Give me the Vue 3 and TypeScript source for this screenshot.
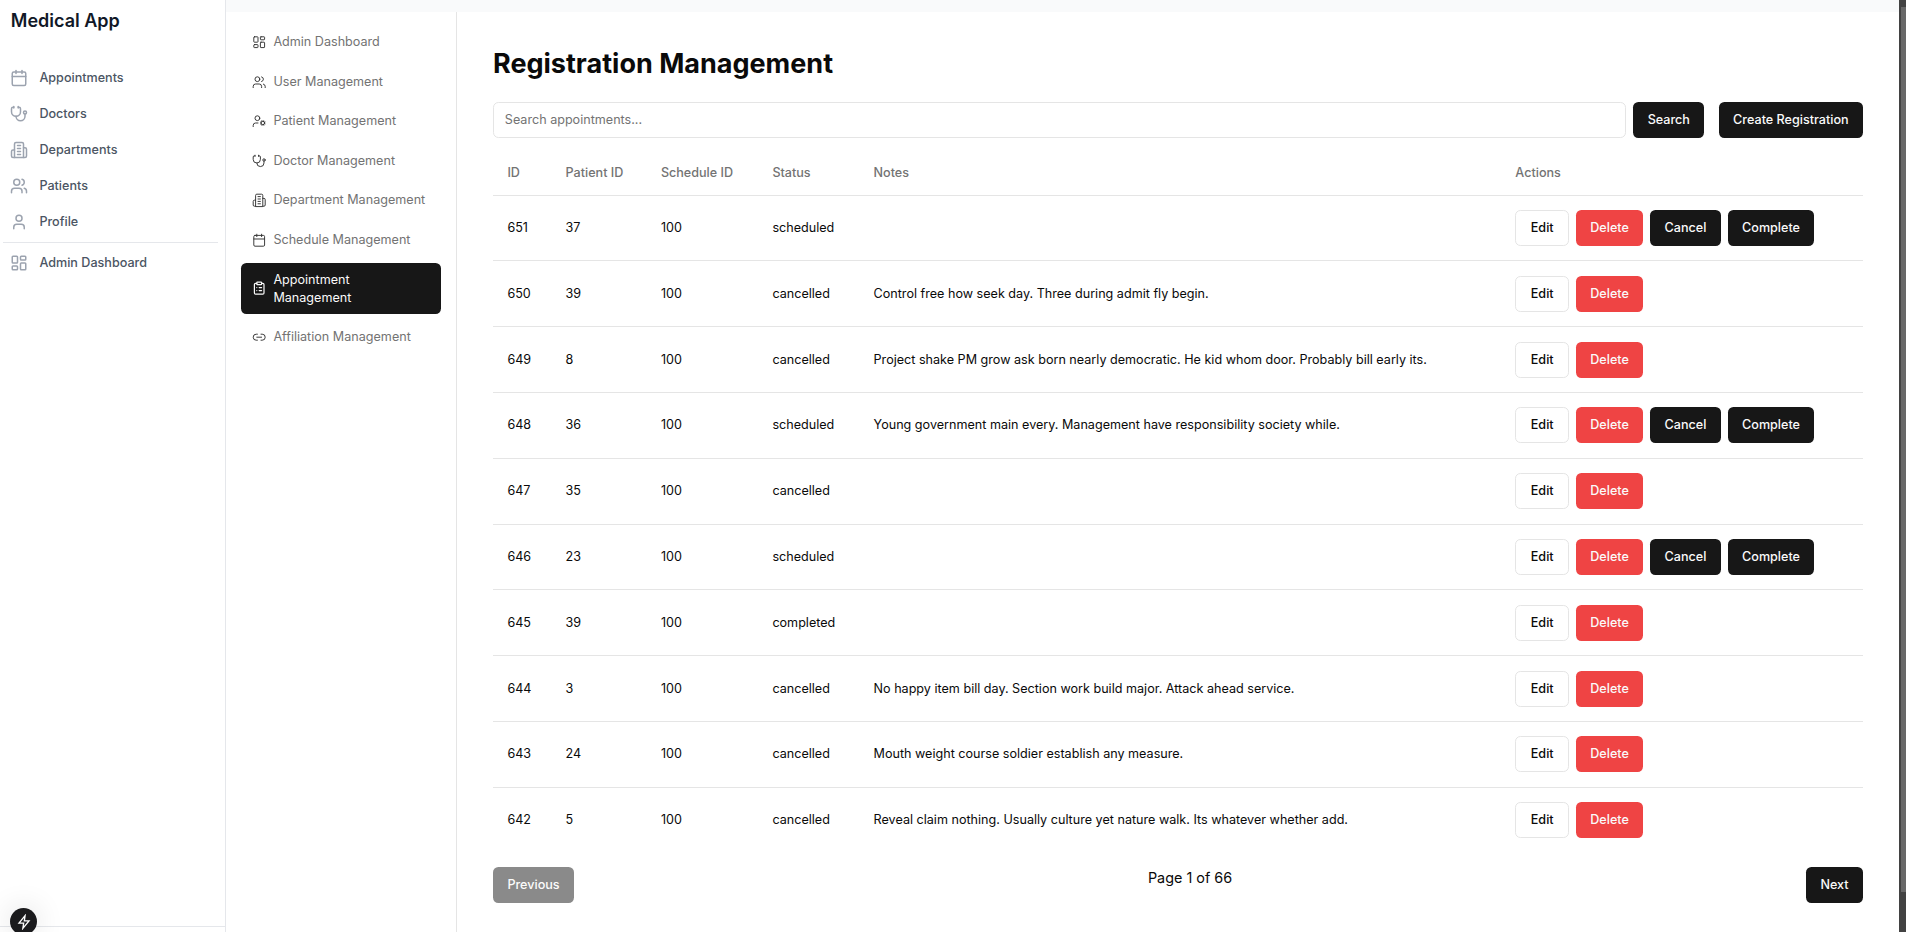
<script setup lang="ts">
type NavItem = { label: string; icon: string; active?: boolean }

const icons: Record<string, string> = {
  calendar:
    '<path d="M8 2v4"/><path d="M16 2v4"/><rect width="18" height="18" x="3" y="4" rx="2"/><path d="M3 10h18"/>',
  stethoscope:
    '<path d="M11 2v2"/><path d="M5 2v2"/><path d="M5 3H4a2 2 0 0 0-2 2v4a6 6 0 0 0 12 0V5a2 2 0 0 0-2-2h-1"/><path d="M8 15a6 6 0 0 0 12 0v-3"/><circle cx="20" cy="10" r="2"/>',
  building:
    '<path d="M6 22V4a2 2 0 0 1 2-2h8a2 2 0 0 1 2 2v18Z"/><path d="M6 12H4a2 2 0 0 0-2 2v6a2 2 0 0 0 2 2h2"/><path d="M18 9h2a2 2 0 0 1 2 2v9a2 2 0 0 1-2 2h-2"/><path d="M10 6h4"/><path d="M10 10h4"/><path d="M10 14h4"/><path d="M10 18h4"/>',
  users:
    '<path d="M16 21v-2a4 4 0 0 0-4-4H6a4 4 0 0 0-4 4v2"/><circle cx="9" cy="7" r="4"/><path d="M22 21v-2a4 4 0 0 0-3-3.87"/><path d="M16 3.13a4 4 0 0 1 0 7.75"/>',
  user: '<path d="M19 21v-2a4 4 0 0 0-4-4H9a4 4 0 0 0-4 4v2"/><circle cx="12" cy="7" r="4"/>',
  dashboard:
    '<rect width="7" height="9" x="3" y="3" rx="1"/><rect width="7" height="5" x="14" y="3" rx="1"/><rect width="7" height="9" x="14" y="12" rx="1"/><rect width="7" height="5" x="3" y="16" rx="1"/>',
  userCog:
    '<circle cx="18" cy="15" r="3"/><circle cx="9" cy="7" r="4"/><path d="M10 15H6a4 4 0 0 0-4 4v2"/><path d="m21.7 16.4-.9-.3"/><path d="m15.2 13.9-.9-.3"/><path d="m16.6 18.7.3-.9"/><path d="m19.1 12.2.3-.9"/><path d="m19.6 18.7-.4-1"/><path d="m16.8 12.3-.4-1"/><path d="m14.3 16.6 1-.4"/><path d="m20.7 13.8 1-.4"/>',
  clipboard:
    '<rect width="8" height="4" x="8" y="2" rx="1"/><path d="M16 4h2a2 2 0 0 1 2 2v14a2 2 0 0 1-2 2H6a2 2 0 0 1-2-2V6a2 2 0 0 1 2-2h2"/><path d="M12 11h4"/><path d="M12 16h4"/><path d="M8 11h.01"/><path d="M8 16h.01"/>',
  link: '<path d="M9 17H7A5 5 0 0 1 7 7h2"/><path d="M15 7h2a5 5 0 1 1 0 10h-2"/><path d="M8 12h8"/>',
}

const mainNav: NavItem[] = [
  { label: 'Appointments', icon: 'calendar' },
  { label: 'Doctors', icon: 'stethoscope' },
  { label: 'Departments', icon: 'building' },
  { label: 'Patients', icon: 'users' },
  { label: 'Profile', icon: 'user' },
]

const adminNav: NavItem[] = [
  { label: 'Admin Dashboard', icon: 'dashboard' },
  { label: 'User Management', icon: 'users' },
  { label: 'Patient Management', icon: 'userCog' },
  { label: 'Doctor Management', icon: 'stethoscope' },
  { label: 'Department Management', icon: 'building' },
  { label: 'Schedule Management', icon: 'calendar' },
  { label: 'Appointment Management', icon: 'clipboard', active: true },
  { label: 'Affiliation Management', icon: 'link' },
]

interface Registration {
  id: number
  patientId: number
  scheduleId: number
  status: 'scheduled' | 'cancelled' | 'completed'
  notes: string
}

const rows: Registration[] = [
  { id: 651, patientId: 37, scheduleId: 100, status: 'scheduled', notes: '' },
  { id: 650, patientId: 39, scheduleId: 100, status: 'cancelled', notes: 'Control free how seek day. Three during admit fly begin.' },
  { id: 649, patientId: 8, scheduleId: 100, status: 'cancelled', notes: 'Project shake PM grow ask born nearly democratic. He kid whom door. Probably bill early its.' },
  { id: 648, patientId: 36, scheduleId: 100, status: 'scheduled', notes: 'Young government main every. Management have responsibility society while.' },
  { id: 647, patientId: 35, scheduleId: 100, status: 'cancelled', notes: '' },
  { id: 646, patientId: 23, scheduleId: 100, status: 'scheduled', notes: '' },
  { id: 645, patientId: 39, scheduleId: 100, status: 'completed', notes: '' },
  { id: 644, patientId: 3, scheduleId: 100, status: 'cancelled', notes: 'No happy item bill day. Section work build major. Attack ahead service.' },
  { id: 643, patientId: 24, scheduleId: 100, status: 'cancelled', notes: 'Mouth weight course soldier establish any measure.' },
  { id: 642, patientId: 5, scheduleId: 100, status: 'cancelled', notes: 'Reveal claim nothing. Usually culture yet nature walk. Its whatever whether add.' },
]
</script>

<template>
  <div class="app">
    <aside class="sidebar">
      <div class="brand">Medical App</div>
      <nav class="main-nav">
        <a v-for="item in mainNav" :key="item.label" class="main-link">
          <svg class="icon" viewBox="0 0 24 24" v-html="icons[item.icon]"></svg>
          <span>{{ item.label }}</span>
        </a>
        <div class="divider"></div>
        <a class="main-link">
          <svg class="icon" viewBox="0 0 24 24" v-html="icons.dashboard"></svg>
          <span>Admin Dashboard</span>
        </a>
      </nav>
      <div class="sidebar-footer"></div>
    </aside>

    <div class="page">
      <div class="topband"></div>
      <div class="body">
        <nav class="admin-nav">
          <a v-for="item in adminNav" :key="item.label" class="admin-link" :class="{ active: item.active }">
            <svg class="icon" viewBox="0 0 24 24" v-html="icons[item.icon]"></svg>
            <span>{{ item.label }}</span>
          </a>
        </nav>

        <main class="content">
          <h1>Registration Management</h1>
          <div class="toolbar">
            <input class="search" type="text" placeholder="Search appointments..." />
            <button class="btn">Search</button>
            <button class="btn create">Create Registration</button>
          </div>
          <table>
            <colgroup>
              <col class="c-id" /><col class="c-patient" /><col class="c-schedule" />
              <col class="c-status" /><col class="c-notes" /><col />
            </colgroup>
            <thead>
              <tr>
                <th>ID</th><th>Patient ID</th><th>Schedule ID</th><th>Status</th><th>Notes</th><th>Actions</th>
              </tr>
            </thead>
            <tbody>
              <tr v-for="row in rows" :key="row.id">
                <td>{{ row.id }}</td>
                <td>{{ row.patientId }}</td>
                <td>{{ row.scheduleId }}</td>
                <td>{{ row.status }}</td>
                <td>{{ row.notes }}</td>
                <td>
                  <div class="actions">
                    <button class="btn outline">Edit</button>
                    <button class="btn danger">Delete</button>
                    <template v-if="row.status === 'scheduled'">
                      <button class="btn">Cancel</button>
                      <button class="btn">Complete</button>
                    </template>
                  </div>
                </td>
              </tr>
            </tbody>
          </table>
          <div class="pager">
            <button class="btn" disabled>Previous</button>
            <span>Page 1 of 66</span>
            <button class="btn">Next</button>
          </div>
        </main>
      </div>
    </div>

    <div class="scrollbar"><div class="thumb"></div></div>

    <div class="dev-badge">
      <svg viewBox="0 0 24 24"><path d="M13.6 2.5 4.5 13.6h7l-1.2 7.9 9.2-11.1h-7z" /></svg>
    </div>
  </div>
</template>

<style>
body {
  margin: 0;
  overflow: hidden;
}
</style>

<style scoped>
* {
  box-sizing: border-box;
}
.app {
  position: relative;
  display: flex;
  height: 932px;
  overflow: hidden;
  background: #fff;
  color: #0a0a0a;
  font-family: Inter, sans-serif;
  font-size: 12.6px;
  line-height: 18px;
}
.icon {
  flex: none;
  fill: none;
  stroke: currentColor;
  stroke-width: 2;
  stroke-linecap: round;
  stroke-linejoin: round;
}
.sidebar {
  flex: none;
  display: flex;
  flex-direction: column;
  width: 226px;
  border-right: 1px solid #e5e7eb;
}
.brand {
  padding: 8px 10.8px 0;
  font-size: 18px;
  line-height: 25.2px;
  font-weight: 600;
  color: #111827;
}
.main-nav {
  flex: 1;
  padding: 26.8px 7px 0 3px;
}
.main-link {
  display: flex;
  align-items: center;
  gap: 11.4px;
  height: 36px;
  padding-left: 7px;
  font-weight: 500;
  color: #4b5563;
}
.main-link .icon {
  width: 18px;
  height: 18px;
  color: #9ca3af;
}
.divider {
  height: 1px;
  margin: 2px 0;
  background: #e5e7eb;
}
.sidebar-footer {
  height: 6px;
  border-top: 1px solid #e5e7eb;
}
.page {
  flex: 1;
  min-width: 0;
  display: flex;
  flex-direction: column;
}
.topband {
  flex: none;
  height: 12px;
  background: #f9fafb;
}
.body {
  flex: 1;
  display: flex;
}
.admin-nav {
  flex: none;
  display: flex;
  flex-direction: column;
  gap: 7.2px;
  width: 231px;
  padding: 14px 15px 0;
  border-right: 1px solid #e5e5e5;
}
.admin-link {
  display: flex;
  align-items: center;
  gap: 7.2px;
  padding: 7.2px 10.8px;
  border-radius: 5.4px;
  color: #737373;
}
.admin-link .icon {
  width: 14.4px;
  height: 14.4px;
  color: #333;
  stroke-width: 1.6;
}
.admin-link.active {
  background: #171717;
  color: #fafafa;
}
.admin-link.active .icon {
  color: #fafafa;
  stroke-width: 2;
}
.content {
  flex: 1;
  min-width: 0;
  padding: 35px 36px 0;
}
h1 {
  margin: 0;
  font-size: 27px;
  line-height: 34px;
  font-weight: 700;
}
.toolbar {
  display: flex;
  gap: 7.2px;
  margin-top: 21px;
}
.search {
  flex: 1;
  min-width: 0;
  height: 36px;
  padding: 0 10.8px 1.6px;
  border: 1px solid #e5e5e5;
  border-radius: 5.4px;
  background: #fff;
  font: inherit;
  outline: none;
}
.search::placeholder {
  color: #737373;
}
.btn {
  flex: none;
  height: 36px;
  padding: 0 14.4px;
  border: 0;
  border-radius: 5.4px;
  background: #171717;
  color: #fafafa;
  font: inherit;
  font-weight: 500;
}
.btn.create {
  margin-left: 7.2px;
}
.btn.outline {
  border: 1px solid #e5e5e5;
  background: #fff;
  color: #0a0a0a;
}
.btn.danger {
  background: #ef4444;
}
.btn:disabled {
  opacity: 0.5;
}
table {
  width: 100%;
  margin-top: 14px;
  table-layout: fixed;
  border-collapse: separate;
  border-spacing: 0;
}
.c-id { width: 58.2px; }
.c-patient { width: 95.3px; }
.c-schedule { width: 111.5px; }
.c-status { width: 101.2px; }
.c-notes { width: 641.8px; }
th {
  height: 43.6px;
  padding: 0 14.4px 1px;
  border-bottom: 1px solid #e5e5e5;
  text-align: left;
  font-weight: 500;
  color: #737373;
}
td {
  height: 65.8px;
  padding: 0 14.4px;
  border-bottom: 1px solid #e5e5e5;
  white-space: nowrap;
}
tbody tr:last-child td {
  height: 64.8px;
  border-bottom: 0;
}
.actions {
  display: flex;
  gap: 6.9px;
}
.pager {
  display: flex;
  justify-content: space-between;
  margin-top: 14.4px;
  font-size: 14.4px;
  line-height: 21.6px;
}
.pager .btn {
  font-size: 12.6px;
}
.scrollbar {
  flex: none;
  width: 7px;
  padding: 7px 0 0 2px;
  background: #424242;
}
.thumb {
  height: 885px;
  background: #686868;
}
.dev-badge {
  position: absolute;
  left: 10px;
  top: 908px;
  display: flex;
  align-items: center;
  justify-content: center;
  width: 27px;
  height: 27px;
  border-radius: 50%;
  background: #1b1b1d;
  box-shadow: 0 0 30px rgba(0, 0, 0, 0.14);
}
.dev-badge svg {
  width: 16px;
  height: 16px;
  fill: none;
  stroke: #fff;
  stroke-width: 2;
}
</style>
